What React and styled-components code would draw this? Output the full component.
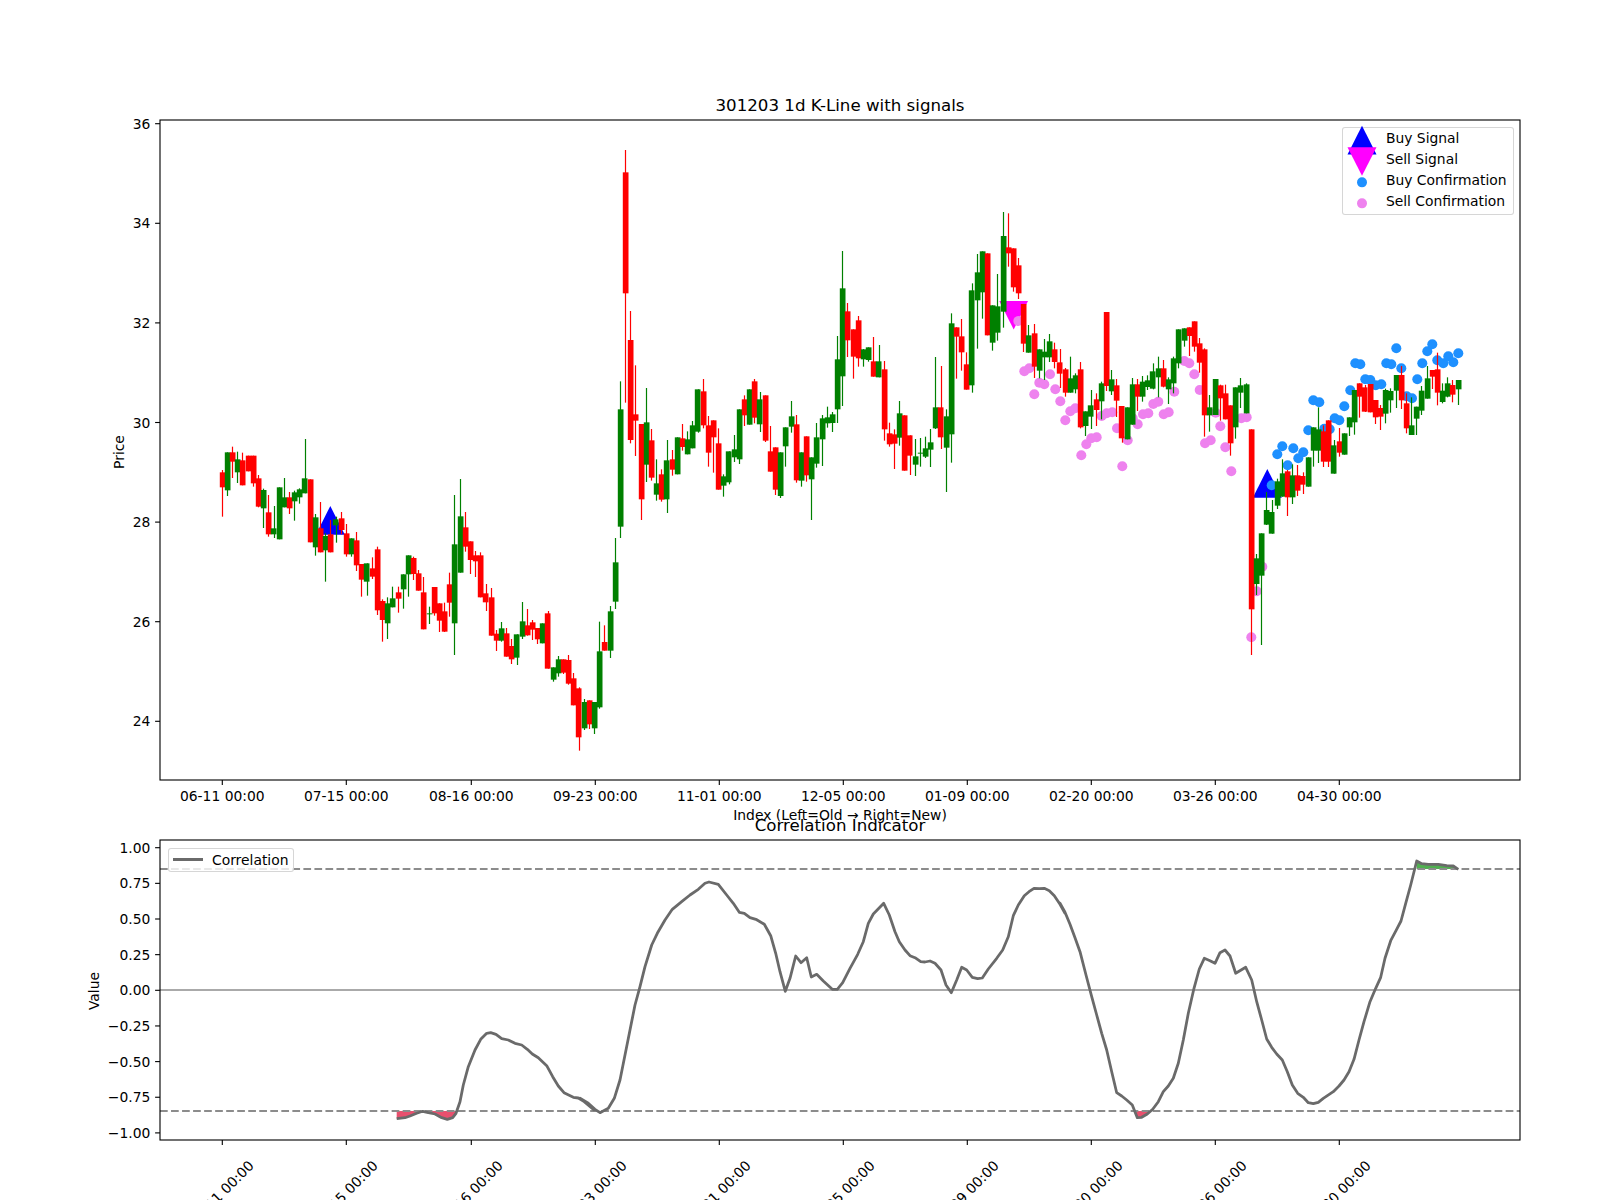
import React from 'react';
import styled, { createGlobalStyle } from 'styled-components';

const GlobalStyle = createGlobalStyle`
  html, body { margin: 0; padding: 0; background: #fff; }
`;

const Figure = styled.div`
  width: 1600px;
  height: 1200px;
  padding-top: 94px;
  box-sizing: border-box;
  overflow: hidden;
  background: #fff;
  display: flex;
  flex-direction: column;
  gap: 34px;
  font-family: "DejaVu Sans", sans-serif;
  color: #000;
`;
const Panel = styled.section`
  display: flex;
  flex-direction: column;
  gap: 2px;
  padding-left: 160px;
  width: 1360px;
`;
const PanelTitle = styled.h2`
  margin: 0;
  height: 24px;
  line-height: 24px;
  text-align: center;
  font-size: 16.67px;
  font-weight: 400;
`;
const Plot = styled.div`
  position: relative;
  width: 1360px;
  height: ${({ $h }) => $h}px;
`;
const ChartSvg = styled.svg`
  display: block;
  overflow: visible;
`;
const Frame = styled.rect`
  fill: none;
  stroke: #000;
  stroke-width: 1.11;
`;
const Tick = styled.line`
  stroke: #000;
  stroke-width: 1.11;
`;
const TickLabel = styled.text`
  font-family: "DejaVu Sans", sans-serif;
  font-size: 13.89px;
  fill: #000;
`;
const Wick = styled.line`
  stroke: ${({ $c }) => ($c === 'r' ? '#ff0000' : '#008000')};
  stroke-width: 1.2;
`;
const Body = styled.rect`
  fill: ${({ $c }) => ($c === 'r' ? '#ff0000' : '#008000')};
`;
const Dot = styled.circle`
  fill: ${({ $buy }) => ($buy ? '#1e90ff' : '#ee82ee')};
`;
const Marker = styled.polygon`
  fill: ${({ $buy }) => ($buy ? '#0000ff' : '#ff00ff')};
`;
const RefLine = styled.line`
  stroke: ${({ $dashed }) => ($dashed ? '#8c8c8c' : '#aaaaaa')};
  stroke-width: 2.08;
  stroke-dasharray: ${({ $dashed }) => ($dashed ? '7.7 3.33' : 'none')};
`;
const Curve = styled.polyline`
  fill: none;
  stroke: #6a6a6a;
  stroke-width: 2.78;
  stroke-linejoin: round;
`;
const Zone = styled.polygon`
  fill: ${({ $up }) => ($up ? '#50b050' : '#e8506e')};
`;
const Legend = styled.div`
  position: absolute;
  box-sizing: border-box;
  background: rgba(255, 255, 255, 0.8);
  border: 1px solid rgba(204, 204, 204, 0.8);
  border-radius: 3px;
  font-size: 13.89px;
  line-height: 20.9px;
`;
const SignalLegend = styled(Legend)`
  top: 7.3px;
  right: 6.3px;
  width: 171.4px;
  height: 88px;
`;
const LineLegend = styled(Legend)`
  top: 7.7px;
  left: 7.7px;
  width: 126.6px;
  height: 24.6px;
  display: flex;
  align-items: center;
  gap: 9.3px;
  padding-left: 4px;
`;
const LegendRow = styled.div`
  display: flex;
  align-items: center;
  gap: 4.6px;
`;
const LegendMark = styled.svg`
  display: block;
  overflow: visible;
  flex: none;
`;
const LineHandle = styled.span`
  display: block;
  flex: none;
  width: 30px;
  height: 3px;
  background: #6a6a6a;
`;

// traced from the chart at 3x: each block holds its crop's top edge
// rows are colour, wick high, wick low, body top, body bottom
const blocks = [
  [400, [['r',210,350,217,262],['g',157,288,157,271],['r',140,234,157,185],['g',155,249,178,217],['r',158,256,181,256],['r',167,214,167,214],['r',167,260,167,250],['r',225,322,235,320],['g',266,384,270,325],['r',285,410,337,403],['g',318,414,385,403],['g',262,418,262,418],['g',234,322,292,322],['r',276,342,292,325],['g',272,362,277,304],['g',265,311,268,292],['g',117,280,235,280],['r',238,427,238,427],['g',342,467,352,442],['r',306,457,385,457],['g',400,545,408,451],['r',360,457,403,457],['g',350,428,358,376],['r',336,403,355,390],['r',372,470,400,463],['g',415,470,415,463],['r',396,513,421,496],['r',492,590,492,539],['g',490,587,490,545],['r',472,537,505,530],['r',440,645,448,631]]],
  [440, [['r',478,605,483,540],['g',472,597,490,550],['g',440,502,475,502],['r',440,518,457,476],['g',403,506,403,448],['g',346,470,346,403],['r',350,420,354,402],['r',390,452,400,452],['r',411,568,457,568],['g',500,552,520,523],['r',441,527,441,520],['r',490,576,490,542],['r',488,576,514,575],['r',398,530,433,488],['g',165,645,313,550],['g',117,398,229,398],['r',216,335,262,320],['r',304,402,304,360],['r',333,411,346,364],['r',337,472,346,472],['r',432,513,460,487],['r',444,587,472,587],['r',570,633,581,602],['g',546,605,565,602],['r',564,650,580,650],['r',597,672,618,658],['g',583,675,583,653],['g',486,597,544,590],['r',507,587,556,586],['r',540,600,547,569],['r',564,612,564,598],['g',550,610,550,610],['r',513,686,520,686],['g',682,725,682,719],['g',648,710,658,700],['r',658,702,658,698],['r',645,734,660,731],['r',699,796,715,796],['r',742,932,745,892],['g',777,870,786,865],['r',781,867,781,853],['g',786,882,786,865],['g',545,806,634,802],['r',556,632,606,632],['g',498,654,514,632],['g',294,507,367,485]]],
  [130, [['g',754,1224,838,1190],['r',60,818,127,490],['r',543,940,630,930],['r',706,978,853,872],['r',882,1170,882,1108],['g',774,1056,877,1004],['r',897,1052,931,1043],['g',988,1112,1060,1094],['r',1018,1115,1033,1109],['g',930,1149,991,1108],['r',960,1037,988,1019],['g',922,1033,922,1033],['r',882,962,925,951],['g',904,973,928,973],['g',873,955,886,955],['g',778,908,778,905],['r',747,895,784,886],['r',858,1010,886,968],['r',871,1028,871,922],['r',895,1079,940,1079],['g',1033,1100,1039,1067],['g',964,1063,964,1057],['g',915,996,958,982],['g',838,1002,838,988],['r',796,888,808,856],['g',778,884,778,884],['r',747,880,754,863],['g',786,906,808,883],['r',796,936,796,932],['r',888,1025,964,1025],['r',952,1095,952,1079],['g',967,1104,967,1098],['g',892,1010,892,949],['g',813,908,859,890],['r',855,1058,883,1051],['g',967,1070,967,1052],['r',919,1055,919,1036],['g',982,1170,982,1048],['g',879,1013,922,1001],['g',855,1008,865,928],['g',830,893,862,880],['g',846,906,853,879],['g',618,879,688,838],['g',363,828,475,739],['r',519,681,544,631]]],
  [230, [['r',298,446,298,380],['r',258,410,271,385],['g',357,410,358,388],['g',352,395,352,390],['r',321,440,394,440],['g',345,442,394,442],['r',393,632,418,598],['r',578,650,610,643],['r',598,717,613,641],['g',513,647,550,623],['r',556,722,556,722],['r',616,735,616,677],['g',627,738,679,704],['g',624,710,668,671],['g',620,684,655,680],['g',597,711,637,659],['g',381,597,532,595],['r',408,657,532,622],['g',538,786,559,653],['g',250,698,280,613],['r',292,446,292,320],['r',267,422,319,367],['r',367,479,403,479],['g',160,488,181,466],['g',72,356,127,211],['g',64,266,64,187],['r',70,316,70,316],['g',226,362,226,338],['g',132,332,229,308],['g',-54,293,18,245],['r',-50,110,52,70],['r',55,185,55,172],['r',84,207,106,190],['r',222,366,222,341],['g',285,368,316,368],['r',282,444,310,410],['g',358,445,358,422],['g',327,450,365,382],['g',312,396,334,382],['r',338,415,358,396],['r',357,474,397,431],['r',414,500,418,488]]],
  [290, [['g',200,308,265,308],['g',250,310,256,298],['r',216,415,238,412],['g',364,438,364,408],['g',300,417,346,380],['r',310,408,328,360],['g',275,388,280,334],['r',66,303,66,288],['g',240,315,268,304],['r',267,381,286,332],['r',348,458,348,445],['g',352,448,352,448],['g',264,404,283,404],['r',267,363,283,320],['g',258,335,275,320],['g',256,300,271,291],['g',220,298,244,296],['g',200,322,235,262],['r',210,292,235,290],['g',262,342,268,298],['g',200,310,205,280],['g',118,235,118,220],['g',115,170,115,152],['r',112,198,112,138],['r',94,185,94,170],['r',144,248,160,218],['r',175,440,178,376],['g',315,425,352,376],['g',267,375,267,375],['r',284,392,286,325],['r',284,388,310,388],['r',346,497,346,460],['g',292,446,292,412],['g',264,354,286,308],['g',280,370,283,370]]],
  [320, [['r',328,1005,328,868],['g',702,825,715,792],['g',640,975,640,767],['g',516,615,570,614],['g',540,641,576,641],['g',476,567,484,557],['g',418,530,460,530],['r',450,588,454,532],['g',433,552,466,532],['r',435,528,466,512],['r',457,522,468,494],['g',412,500,412,500],['g',322,440,322,392],['g',262,429,328,392],['r',316,441,334,425],['r',301,441,301,425],['g',360,461,376,461],['r',324,410,364,398],['g',340,404,340,404],['g',292,348,292,322],['g',210,344,210,307],['r',190,293,190,230],['r',195,276,202,275],['r',192,277,192,277],['r',240,312,240,292],['r',255,330,264,290],['g',206,310,210,281],['g',205,278,213,241],['g',165,264,165,212],['r',138,267,165,241],['r',220,340,250,325],['g',232,345,316,345],['g',260,345,260,296],['g',198,285,212,272],['g',138,236,175,236],['r',150,207,150,170],['r',98,256,148,218],['g',190,250,212,246],['g',172,232,190,230],['r',180,247,195,224],['g',180,255,180,208]]],
];

const candles = blocks.flatMap(([y0, rows]) =>
  rows.map(([c, hi, lo, top, bot]) => ({
    c,
    hi: y0 + hi / 3,
    lo: y0 + lo / 3,
    top: y0 + top / 3,
    bot: y0 + bot / 3,
  }))
);

const barX = (i) => 222.3 + 5.171 * i;

const sellDots = [[1018.3,321],[1024.3,371.3],[1029.3,368.3],[1034.3,394.3],[1039.3,382.7],[1044.3,384.3],[1050,374.3],[1055.3,389.3],[1060.3,401.3],[1065.3,420.3],[1070.3,411.3],[1075.3,408.3],[1081.3,455.3],[1086.3,444.3],[1091.3,438.3],[1096.7,437.3],[1101.7,416],[1106.7,413.3],[1112.3,412.3],[1117,428.3],[1122.3,466.3],[1127.7,440.3],[1132.7,418.3],[1137.7,424.3],[1143,414.3],[1148.3,413.3],[1153.3,404],[1158.3,401.7],[1163.7,414.3],[1168.7,412.3],[1174.3,391.7],[1184.3,361],[1189.3,363.3],[1194.3,374.3],[1199.7,390],[1205,443.3],[1210.7,440.3],[1215.7,412.7],[1220.3,426.3],[1225.3,447.3],[1231.3,471.3],[1241.3,418.3],[1246.7,417.3],[1251.3,637.3],[1256.7,591.3],[1262.3,566.7]];

const buyDots = [[1271.7,485.3],[1277.3,454.3],[1282.3,446.3],[1287.7,465.3],[1293.3,448.3],[1298.3,458.3],[1303.3,452.3],[1308.3,430.3],[1313.3,400.3],[1319.3,402.3],[1324.3,428.7],[1329.7,429.3],[1334.7,418.3],[1339.3,420.3],[1344.3,406.3],[1350.3,390.3],[1355.3,363.3],[1360.3,364.3],[1365.3,379.3],[1370.3,380],[1375.7,385.3],[1381.3,384.3],[1386.3,363.3],[1391.3,364.3],[1396.3,348.3],[1401.3,368.3],[1406.7,396.3],[1412,398.3],[1417.3,379.3],[1422.3,363.3],[1427.3,351.3],[1432.3,344.3],[1437.3,360.3],[1443.3,363.3],[1448.3,356.3],[1453.3,362.3],[1458.3,353.3]];

const crop = (x0, pts) => pts.map(([x, y]) => [x0 + x / 3, 770 + y / 3]);

const corr = [
  ...crop(100, [[890,1046],[915,1043],[930,1038],[950,1030],[968,1024],[985,1028],[1005,1032],[1025,1043],[1042,1048],[1058,1043],[1068,1030],[1080,995],[1090,945],[1105,890],[1125,840],[1142,808],[1160,790],[1172,788],[1188,793],[1205,806],[1225,810],[1245,820],[1265,825],[1282,838],[1297,852],[1315,863],[1340,887],[1358,920],[1375,948],[1392,968],[1420,982],[1435,984],[1465,1002],[1482,1020]]),
  ...crop(580, [[0,985],[25,1000],[45,1018],[60,1028],[85,1015],[103,985],[120,930],[135,855],[150,780],[165,705],[180,650],[195,590],[215,525],[232,490],[255,450],[277,418],[305,395],[330,375],[355,358],[375,340],[387,336],[415,343],[440,375],[460,400],[478,427],[493,430],[510,443],[530,449],[553,463],[572,497],[587,550],[600,605],[616,664],[630,625],[647,558],[663,578],[680,563],[694,621],[710,613],[730,633],[757,658],[772,658],[788,638],[810,595],[833,553],[850,515],[865,460],[880,432],[911,400],[928,435],[945,485],[958,515],[975,540],[990,557],[1005,563],[1022,575],[1035,576],[1050,573],[1065,580],[1083,600],[1098,645],[1114,668],[1130,630],[1145,592],[1160,600],[1177,622],[1193,626],[1207,624],[1225,597],[1250,565],[1268,540],[1285,500],[1300,437],[1315,405],[1333,377],[1347,365],[1362,355],[1378,356],[1393,355],[1408,362],[1423,377],[1440,403],[1455,430]]),
  ...crop(1060, [[0,400],[15,427],[30,463],[45,503],[60,545],[78,615],[95,680],[110,735],[125,790],[140,840],[155,905],[170,968],[185,978],[200,990],[217,1005],[232,1043],[245,1042],[262,1032],[278,1018],[295,995],[310,965],[325,948],[340,925],[355,880],[370,810],[385,730],[402,655],[418,597],[433,565],[450,572],[465,580],[480,548],[495,540],[510,558],[527,610],[557,592],[575,630],[590,695],[605,750],[620,807],[635,832],[650,852],[667,870],[682,905],[697,945],[713,970],[730,982],[745,998],[760,1001],[775,997],[790,985],[820,965],[837,948],[852,930],[867,905],[882,868],[897,810],[912,755],[930,695],[947,655],[962,622],[975,565],[992,512],[1008,482],[1023,453],[1037,400],[1052,345],[1070,273],[1085,281],[1105,283],[1135,283],[1160,287],[1180,288],[1195,298]]),
];

const zones = [
  { up: false, pts: crop(100, [[890,1023],[890,1046],[915,1043],[930,1038],[950,1030],[968,1024],[985,1028],[1005,1032],[1025,1043],[1042,1048],[1058,1043],[1068,1030],[1070,1023]]) },
  { up: false, pts: crop(1060, [[226,1023],[232,1043],[245,1042],[262,1032],[275,1023]]) },
  { up: true, pts: crop(1060, [[1070,273],[1085,281],[1105,283],[1135,283],[1160,287],[1180,288],[1193,297],[1070,297]]) },
];

const toPoints = (pts) => pts.map((p) => p.map((n) => n.toFixed(1)).join(',')).join(' ');

const dateLabels = ['06-11 00:00', '07-15 00:00', '08-16 00:00', '09-23 00:00', '11-01 00:00', '12-05 00:00', '01-09 00:00', '02-20 00:00', '03-26 00:00', '04-30 00:00'];
const tickX = (k) => Math.round(barX(k * 24)) + 0.3;

const priceTicks = [36, 34, 32, 30, 28, 26, 24];
const priceY = (v) => 422.5 - (v - 30) * 49.8;
const corrTicks = ['1.00', '0.75', '0.50', '0.25', '0.00', '\u22120.25', '\u22120.50', '\u22120.75', '\u22121.00'];
const corrY = (k) => 847.7 + k * 35.65;

const Candle = ({ i, d }) => {
  const x = Math.floor(barX(i)) + 0.5;
  return (
    <g>
      <Wick $c={d.c} x1={x} x2={x} y1={d.hi} y2={d.lo} />
      <Body $c={d.c} x={Math.round(barX(i) - 2.6) - 0.2} y={d.top} width={5.7} height={Math.max(d.bot - d.top, 1)} />
    </g>
  );
};

const YAxis = ({ ticks }) =>
  ticks.map(([label, y]) => (
    <g key={label}>
      <Tick x1={155.1} x2={160} y1={y} y2={y} />
      <TickLabel x={150.3} y={y + 5.1} textAnchor="end">{label}</TickLabel>
    </g>
  ));

const PriceChart = () => (
  <ChartSvg width="1360" height="660" viewBox="160 120 1360 660">
    <Marker $buy points="330.3,506 344.8,534.7 315.8,534.7" />
    <Marker $buy points="1267.3,469 1281.8,497.7 1252.8,497.7" />
    <Marker points="999.3,301 1028,301 1013.7,329.5" />
    {sellDots.map(([x, y]) => <Dot key={x} cx={x} cy={y} r={5} />)}
    {buyDots.map(([x, y]) => <Dot key={x} $buy cx={x} cy={y} r={5} />)}
    {candles.map((d, i) => <Candle key={i} i={i} d={d} />)}
    <Frame x={160} y={120} width={1360} height={660} />
    <YAxis ticks={priceTicks.map((v) => [v, priceY(v)])} />
    {dateLabels.map((label, k) => (
      <g key={label}>
        <Tick x1={tickX(k)} x2={tickX(k)} y1={780} y2={784.9} />
        <TickLabel x={tickX(k)} y={801} textAnchor="middle">{label}</TickLabel>
      </g>
    ))}
    <TickLabel x={840} y={820} textAnchor="middle">Index (Left=Old → Right=New)</TickLabel>
    <TickLabel transform="rotate(-90 124 452)" x={124} y={452} textAnchor="middle">Price</TickLabel>
  </ChartSvg>
);

const CorrelationChart = () => (
  <ChartSvg width="1360" height="300" viewBox="160 840 1360 300">
    {zones.map((z, i) => <Zone key={i} $up={z.up} points={toPoints(z.pts)} />)}
    <RefLine $dashed x1={160} x2={1520} y1={869} y2={869} />
    <RefLine $dashed x1={160} x2={1520} y1={1111} y2={1111} />
    <RefLine x1={160} x2={1520} y1={990} y2={990} />
    <Curve points={toPoints(corr)} />
    <Frame x={160} y={840} width={1360} height={300} />
    <YAxis ticks={corrTicks.map((label, k) => [label, corrY(k)])} />
    {dateLabels.map((label, k) => (
      <g key={label}>
        <Tick x1={tickX(k)} x2={tickX(k)} y1={1140} y2={1144.9} />
        <TickLabel
          transform={`rotate(-45 ${tickX(k) - 1} 1193)`}
          x={tickX(k) - 1}
          y={1193}
          textAnchor="middle"
          dominantBaseline="central"
        >
          {label}
        </TickLabel>
      </g>
    ))}
    <TickLabel transform="rotate(-90 99 991)" x={99} y={991} textAnchor="middle">Value</TickLabel>
  </ChartSvg>
);

const markBox = { width: 38, height: 20.9, viewBox: '-19 -10.45 38 20.9' };

const signalRows = [
  ['Buy Signal', <Marker $buy points="0,-12.6 14.5,16 -14.5,16" />],
  ['Sell Signal', <Marker points="-14.5,-12.3 14.5,-12.3 0,16.4" />],
  ['Buy Confirmation', <Dot $buy cx={0} cy={1.9} r={5} />],
  ['Sell Confirmation', <Dot cx={0} cy={1.9} r={5} />],
];

export default function App() {
  return (
    <Figure>
      <GlobalStyle />
      <Panel>
        <PanelTitle>301203 1d K-Line with signals</PanelTitle>
        <Plot $h={660}>
          <PriceChart />
          <SignalLegend>
            {signalRows.map(([label, mark]) => (
              <LegendRow key={label}>
                <LegendMark {...markBox}>{mark}</LegendMark>
                <span>{label}</span>
              </LegendRow>
            ))}
          </SignalLegend>
        </Plot>
      </Panel>
      <Panel>
        <PanelTitle>Correlation Indicator</PanelTitle>
        <Plot $h={300}>
          <CorrelationChart />
          <LineLegend>
            <LineHandle />
            <span>Correlation</span>
          </LineLegend>
        </Plot>
      </Panel>
    </Figure>
  );
}
